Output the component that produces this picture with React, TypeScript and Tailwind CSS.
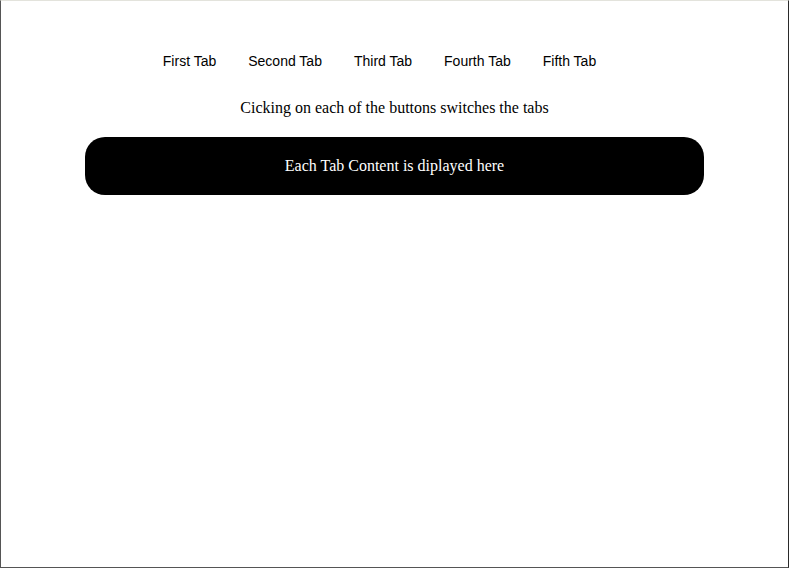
import React, { useState } from "react";

const tabs = ["First Tab", "Second Tab", "Third Tab", "Fourth Tab", "Fifth Tab"];

// Caixa com os botões e o conteúdo da aba
export default function App() {
  const [ativa, setAtiva] = useState(0);

  return (
    <div className="h-[568px] w-[789px] border-t border-t-[#e3e3dc] border-l border-l-[#555] border-r border-r-[#2a2a2a] border-b border-b-[#555] bg-white">
      <div className="flex justify-center pt-[50px] pr-[30px] font-['Liberation_Sans',Arial,sans-serif] text-[14px] leading-[20px] text-black">
        {tabs.map((t, i) => (
          <button
            key={t}
            onClick={() => setAtiva(i)}
            className="px-[16px] cursor-pointer"
          >
            {t}
          </button>
        ))}
      </div>
      <p className="mt-[27px] text-center font-['Liberation_Serif','Times_New_Roman',serif] text-[16px] leading-[20px] text-black">
        Cicking on each of the buttons switches the tabs
      </p>
      <div
        className="mx-auto mt-[19px] flex h-[58px] w-[619px] items-center justify-center rounded-[20px] bg-black font-['Liberation_Serif','Times_New_Roman',serif] text-[16px] text-white"
        data-tab={ativa}
      >
        Each Tab Content is diplayed here
      </div>
    </div>
  );
}
